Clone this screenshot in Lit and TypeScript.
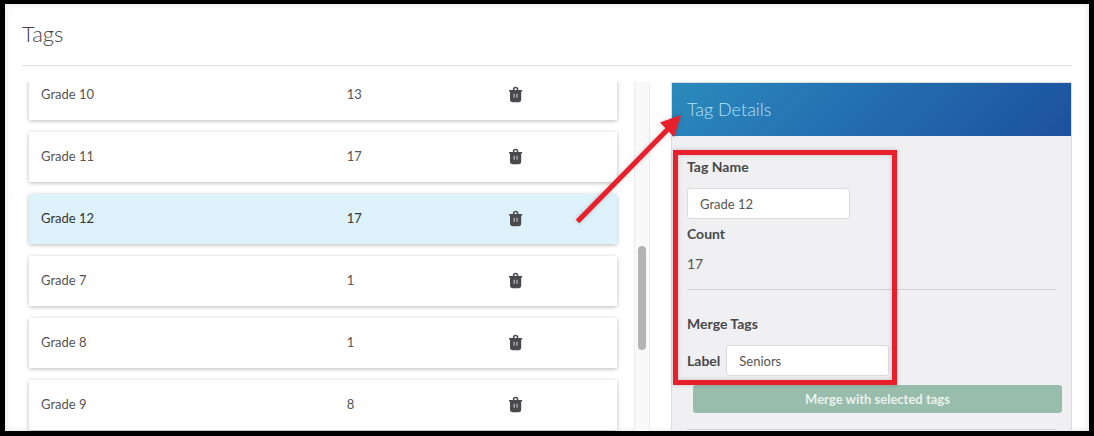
import { LitElement, html, css } from "lit";
import { customElement, property, state } from "lit/decorators.js";

interface Tag {
  name: string;
  count: number;
}

@customElement("trash-icon")
export class TrashIcon extends LitElement {
  static styles = css`
    :host { display: block; width: 14px; height: 17px; }
    svg { display: block; }
  `;

  render() {
    return html`
      <svg width="14" height="17" viewBox="0 0 14 17" aria-hidden="true">
        <path d="M4.600 4.200v-.8a2 2 0 0 1 4 0v.8" fill="none" stroke="#4a4a4c" stroke-width="1.500" />
        <path d="M0 4h13.200v1.500h-1v8.300A2.300 2.300 0 0 1 9.900 16.200h-6.600A2.300 2.300 0 0 1 1 13.800V5.500H0z" fill="#4a4a4c" />
        <path d="M5.200 7.800v4M8 7.800v4" stroke="#a6a6a8" stroke-width="1.500" />
      </svg>
    `;
  }
}

@customElement("tag-list")
export class TagList extends LitElement {
  @property({ attribute: false }) tags: Tag[] = [];
  @property() selected = "";

  static styles = css`
    :host { display: flex; min-height: 0; overflow: hidden; }
    .rows { flex: 1; min-width: 0; padding: 0 17px 0 7px; }
    table {
      width: 100%;
      margin-top: -24px;
      table-layout: fixed;
      border-collapse: separate;
      border-spacing: 0 12px;
    }
    tr { height: 50px; border-radius: 2px; background: #fff; box-shadow: 0 1px 4px rgba(0, 0, 0, 0.28); }
    td { padding: 0 12px 2px; vertical-align: middle; }
    .selected { background: #def2fc; color: #333; }
    .name, .count { box-sizing: border-box; }
    .name { width: 52%; }
    .count { width: 162px; }
    button { display: block; margin: 0; padding: 0; border: 0; background: none; cursor: pointer; }
    .track {
      box-sizing: border-box;
      width: 16px;
      padding: 164px 3px 0;
      border: solid #ececec;
      border-width: 0 1px;
      background: #f9f9f9;
    }
    .thumb { height: 104px; border-radius: 4px; background: #b4b4b4; }
  `;

  private pick(name: string) {
    this.dispatchEvent(new CustomEvent("pick", { detail: name }));
  }

  render() {
    return html`
      <div class="rows">
        <table>
          <tbody>
            ${this.tags.map(
              (t) => html`
                <tr class=${t.name === this.selected ? "selected" : ""} @click=${() => this.pick(t.name)}>
                  <td class="name">${t.name}</td>
                  <td class="count">${t.count}</td>
                  <td><button type="button" aria-label="Delete ${t.name}"><trash-icon></trash-icon></button></td>
                </tr>
              `
            )}
          </tbody>
        </table>
      </div>
      <div class="track"><div class="thumb"></div></div>
    `;
  }
}

@customElement("tag-details")
export class TagDetails extends LitElement {
  @property({ attribute: false }) tag: Tag = { name: "", count: 0 };

  static styles = css`
    :host { display: block; position: relative; min-height: 0; }
    .panel { box-sizing: border-box; height: 100%; overflow: hidden; border: 1px solid #dcdce2; border-bottom: 0; background: #f0f0f3; }
    h2 {
      margin: 0;
      padding: 0 15px;
      font-size: 18px;
      font-weight: 300;
      line-height: 53px;
      color: #b5e2f6;
      background: linear-gradient(135deg, #2b8bbd, #246fb0 45%, #1c519f);
    }
    .body { padding: 16px 15px; }
    .label { display: block; font-size: 14px; font-weight: 700; line-height: 30px; color: #48484a; }
    input {
      box-sizing: border-box;
      display: block;
      width: 163px;
      height: 31px;
      margin: 0;
      padding: 0 12px;
      border: 1px solid #d9d9de;
      border-radius: 3px;
      background: #fff;
      font: inherit;
      color: #555;
    }
    .tag-name { margin-top: 6px; }
    .value { font-size: 14px; line-height: 30px; }
    hr { height: 1px; margin: 10px 0 19px; border: 0; background: #d3d3d7; }
    .field { display: flex; align-items: center; gap: 6px; margin-top: 6px; }
    .merge {
      display: block;
      width: 100%;
      height: 28px;
      margin: 9px 0 16px 6px;
      padding: 0;
      border: 0;
      border-radius: 3px;
      background: #98bdac;
      font: inherit;
      font-weight: 700;
      color: #e9f2ee;
    }
    .highlight {
      position: absolute;
      box-sizing: border-box;
      top: 68px;
      left: 2px;
      width: 224px;
      height: 235px;
      border: 5px solid #e8202b;
      filter: drop-shadow(0 0 2px rgba(0, 0, 0, 0.2));
      pointer-events: none;
    }
    .arrow {
      position: absolute;
      top: 28px;
      left: -100px;
      filter: drop-shadow(0 0 2px rgba(0, 0, 0, 0.2));
      pointer-events: none;
    }
  `;

  render() {
    return html`
      <section class="panel">
        <h2>Tag Details</h2>
        <div class="body">
          <label class="label" for="name">Tag Name</label>
          <input class="tag-name" id="name" type="text" .value=${this.tag.name} />
          <div class="label">Count</div>
          <div class="value">${this.tag.count}</div>
          <hr />
          <div class="label">Merge Tags</div>
          <div class="field">
            <label class="label" for="merge">Label</label>
            <input id="merge" type="text" value="Seniors" />
          </div>
          <button class="merge" type="button">Merge with selected tags</button>
          <hr />
        </div>
      </section>
      <div class="highlight"></div>
      <svg class="arrow" width="116" height="116" viewBox="0 0 116 116" aria-hidden="true">
        <path d="M6.500 111.500 L98 18" stroke="#e8202b" stroke-width="5" />
        <path d="M110 5 L103 27 L89 12.500 Z" fill="#e8202b" />
      </svg>
    `;
  }
}

@customElement("app-root")
export class AppRoot extends LitElement {
  @state() private selected = "Grade 12";

  private tags: Tag[] = [
    { name: "Grade 10", count: 13 },
    { name: "Grade 11", count: 17 },
    { name: "Grade 12", count: 17 },
    { name: "Grade 7", count: 1 },
    { name: "Grade 8", count: 1 },
    { name: "Grade 9", count: 8 },
  ];

  static styles = css`
    :host {
      display: flex;
      flex-direction: column;
      box-sizing: border-box;
      height: 100vh;
      padding: 0 17px;
      overflow: hidden;
      border: 5px solid #000;
      border-top-width: 4px;
      background: #fff;
      box-shadow: inset 0 0 6px rgba(0, 0, 0, 0.12);
      font: 13px/20px Lato, sans-serif;
      color: #555;
    }
    h1 {
      margin: 0 0 16px;
      padding-bottom: 2px;
      border-bottom: 1px solid #dedede;
      font-size: 22px;
      font-weight: 300;
      line-height: 59px;
      color: #444;
    }
    main {
      display: grid;
      flex: 1;
      grid-template-columns: 628fr 401fr;
      grid-template-rows: minmax(0, 1fr);
      gap: 21px;
      min-height: 0;
    }
  `;

  render() {
    const tag = this.tags.find((t) => t.name === this.selected) ?? this.tags[0];
    return html`
      <h1>Tags</h1>
      <main>
        <tag-list
          .tags=${this.tags}
          .selected=${this.selected}
          @pick=${(e: CustomEvent<string>) => (this.selected = e.detail)}
        ></tag-list>
        <tag-details .tag=${tag}></tag-details>
      </main>
    `;
  }
}
